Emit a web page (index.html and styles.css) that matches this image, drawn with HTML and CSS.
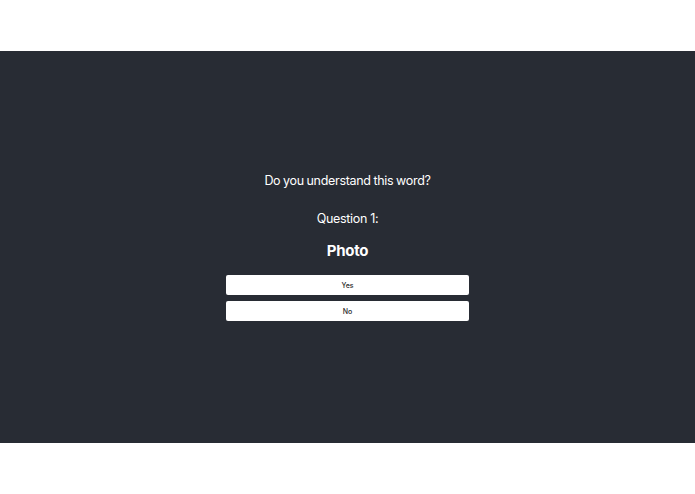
FILE: index.html
```html
<!DOCTYPE html>
<html>
<head>
<meta charset="utf-8">
<link rel="stylesheet" href="styles.css">
</head>
<body>
<div class="page">
  <main class="band">
    <div class="quiz">
      <p class="prompt">Do you understand this word?</p>
      <p class="question">Question 1:</p>
      <p class="word">Photo</p>
      <div class="answers">
        <button class="answer">Yes</button>
        <button class="answer">No</button>
      </div>
    </div>
  </main>
</div>
</body>
</html>
```
FILE: styles.css
```css
html, body {
  margin: 0;
  padding: 0;
  background: #ffffff;
}
.page {
  padding: 51px 0;
  font-family: Inter, "Liberation Sans", sans-serif;
}
.band {
  height: 392px;
  background: #282c34;
  display: flex;
  align-items: center;
  justify-content: center;
}
.quiz {
  display: flex;
  flex-direction: column;
  align-items: center;
  color: #ffffff;
}
.quiz p {
  margin: 0;
}
.prompt {
  font-size: 12.5px;
  line-height: 16px;
  letter-spacing: -0.3px;
  word-spacing: -0.5px;
}
.question {
  font-size: 12.5px;
  line-height: 16px;
  letter-spacing: -0.3px;
  margin-top: 22px !important;
}
.word {
  font-size: 15px;
  line-height: 20px;
  font-weight: 700;
  letter-spacing: -0.3px;
  margin-top: 14px !important;
}
.answers {
  margin-top: 14px;
  display: flex;
  flex-direction: column;
  gap: 6px;
}
.answer {
  width: 243px;
  height: 20px;
  border: none;
  border-radius: 2px;
  background: #ffffff;
  color: #2a2a2a;
  font-family: Inter, "Liberation Sans", sans-serif;
  font-size: 7px;
  font-weight: 500;
  padding: 0;
}
```
